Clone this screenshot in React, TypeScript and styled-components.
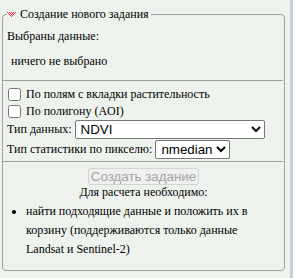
import React from "react";
import styled, { createGlobalStyle } from "styled-components";

const Global = createGlobalStyle`
  html, body { margin: 0; padding: 0; background: #edf3ec; }
  body { font-family: "Liberation Serif", "Times New Roman", serif; font-size: 12px; }
`;

const Page = styled.div`
  display: flex;
  width: 293px;
  height: 278px;
  box-sizing: border-box;
  border-right: 3px solid #c9ced9;
  font-family: "Liberation Serif", "Times New Roman", serif;
  font-size: 12px;
  color: #000;
`;

const Fieldset = styled.fieldset`
  margin: 7px 5px 7px 2px;
  padding: 0 4px 0 4px;
  border: 1px solid #a0a0a0;
  border-radius: 4px;
  flex: 1;
  min-width: 0;
  display: flex;
  flex-direction: column;
`;

const Legend = styled.legend`
  padding: 0 2px 0 0;
  display: flex;
  align-items: center;
  gap: 4px;
  height: 14px;
  line-height: 14px;
`;

const Line = styled.div<{ $indent?: number; $h: number }>`
  height: ${(p) => p.$h}px;
  flex: none;
  display: flex;
  align-items: center;
  padding-left: ${(p) => p.$indent ?? 0}px;
  white-space: nowrap;
`;

const Rule = styled.hr`
  flex: none;
  margin: 0 0 0 -4px;
  border: 0;
  border-top: 1px solid #a0a0a0;
  width: calc(100% + 7px);
  height: 0;
`;

const Check = styled.input`
  margin: 0 5px 0 1px;
  width: 13px;
  height: 13px;
`;

const Select = styled.select<{ $w: number }>`
  font-family: "Liberation Sans", Arial, sans-serif;
  font-size: 13.33px;
  height: 19px;
  width: ${(p) => p.$w}px;
  margin-left: 3px;
  background: #fff;
  color: #000;
  border: 1px solid #767676;
  border-radius: 2px;
  padding: 0 0 0 1px;
`;

const Center = styled.div<{ $mt?: number }>`
  flex: none;
  display: flex;
  justify-content: center;
  margin-top: ${(p) => p.$mt ?? 0}px;
  line-height: 14px;
`;

const Button = styled.button`
  font-family: "Liberation Sans", Arial, sans-serif;
  font-size: 13.33px;
  color: #a3a3a3;
  background: #f0f0f0;
  border: 1px solid #d4d4d4;
  border-radius: 3px;
  padding: 0 2px;
  height: 17px;
  line-height: 15px;
`;

const List = styled.ul`
  margin: 3px 0 0 0;
  padding: 0 20px 0 19px;
  line-height: 19px;
`;

const Tri = () => (
  <svg width="9" height="5" viewBox="0 0 9 5">
    {[0, 2, 4, 6, 8].map((x) => <rect key={"a" + x} x={x} y={0} width={1} height={1} fill="#ff2a4a" />)}
    {[1, 3, 5, 7].map((x) => <rect key={"b" + x} x={x} y={1} width={1} height={1} fill="#ff2a4a" />)}
    {[2, 4, 6].map((x) => <rect key={"c" + x} x={x} y={2} width={1} height={1} fill="#ff2a4a" />)}
    {[3, 5].map((x) => <rect key={"d" + x} x={x} y={3} width={1} height={1} fill="#ff2a4a" />)}
    <rect x={4} y={4} width={1} height={1} fill="#ff2a4a" />
  </svg>
);

export default function App() {
  return (
    <>
      <Global />
      <Page>
        <Fieldset>
          <Legend>
            <Tri />
            Создание нового задания
          </Legend>
          <Line $h={30}>Выбраны данные:</Line>
          <Line $h={20} $indent={4}>ничего не выбрано</Line>
          <Line $h={9} />
          <Rule />
          <Line $h={4} />
          <Line $h={18}>
            <Check type="checkbox" />По полям с вкладки растительность
          </Line>
          <Line $h={17}>
            <Check type="checkbox" />По полигону (AOI)
          </Line>
          <Line $h={19}>
            Тип данных:
            <Select $w={190} defaultValue="NDVI">
              <option>NDVI</option>
            </Select>
          </Line>
          <Line $h={20}>
            Тип статистики по пикселю:
            <Select $w={75} defaultValue="nmedian">
              <option>nmedian</option>
            </Select>
          </Line>
          <Line $h={2} />
          <Rule />
          <Center $mt={6}>
            <Button disabled>Создать задание</Button>
          </Center>
          <Center>Для расчета необходимо:</Center>
          <List>
            <li>найти подходящие данные и положить их в корзину (поддерживаются только данные Landsat и Sentinel-2)</li>
          </List>
        </Fieldset>
      </Page>
    </>
  );
}
